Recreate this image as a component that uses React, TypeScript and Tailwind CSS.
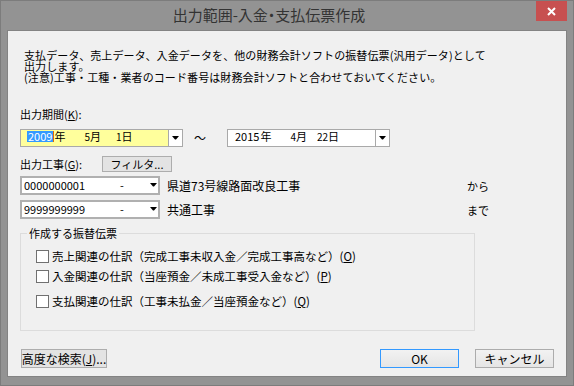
const jp = "font-['Noto_Sans_CJK_JP','Noto_Sans_CJK_SC',sans-serif]";

function Arrow() {
  return (
    <svg width="7" height="4" viewBox="0 0 7 4" className="block">
      <polygon points="0,0 7,0 4,3.5 3,3.5" fill="#000" />
    </svg>
  );
}

function DateBox({ yellow, y, m, d, selected }: { yellow?: boolean; y: string; m: string; d: string; selected?: boolean }) {
  return (
    <div
      className={`w-[163px] h-[18px] border border-[#a9a9a9] flex ${yellow ? 'bg-[#ffff9c]' : 'bg-white'}`}
    >
      <div className="flex-1 flex items-start pt-[1px] pl-[6px] text-[11px] leading-[11px] [font-feature-settings:'palt']">
        {selected ? (
          <span className="flex">
            <span className="bg-[#3399ff] text-white px-[1px]">{y}</span>
            <span className="w-[1px] bg-[#e06a00]" />
          </span>
        ) : (
          <span className="px-[1px]">{y}</span>
        )}
        <span>年</span>
        <span className="ml-[19px] text-[10px]">{m}</span>
        <span>月</span>
        <span className={`${d.length > 1 ? 'ml-[10px]' : 'ml-[15px]'} text-[10px]`}>{d}</span>
        <span>日</span>
      </div>
      <div className="w-[14px] h-full bg-white border-l border-[#a9a9a9] flex items-center justify-center">
        <Arrow />
      </div>
    </div>
  );
}

function Combo({ code }: { code: string }) {
  return (
    <div className="w-[140px] h-[19px] border-2 border-[#b0b0b0] bg-white flex items-start pt-[1px] pl-[2px] text-[11px] leading-[12px]">
      <span className="w-[96px]">{code}</span>
      <span className="w-[30px]">-</span>
      <span className="pt-[4px]">
        <Arrow />
      </span>
    </div>
  );
}

function Check({ label, k }: { label: string; k: string }) {
  return (
    <div className="flex items-center h-[13px]">
      <div className="w-[13px] h-[13px] border border-[#707070] bg-white" />
      <span className="ml-[3px] whitespace-nowrap text-[11.5px] leading-[13px]">
        {label}(<span className="underline">{k}</span>)
      </span>
    </div>
  );
}

export default function App() {
  return (
    <div className={`w-[574px] h-[386px] bg-[#939393] border border-[#7c7c7c] flex flex-col text-black ${jp}`}>
      {/* Title bar */}
      <div className="relative h-[29px] flex items-center justify-center pr-[36px]">
        <span className="text-[15px] text-[#333] [font-feature-settings:'palt']">出力範囲-入金・支払伝票作成</span>
        <div className="absolute right-[6px] top-0 w-[31px] h-[20px] bg-[#c75050] flex items-center justify-center">
          <svg width="9" height="9" viewBox="0 0 9 9">
            <path d="M1 1 L8 8 M8 1 L1 8" stroke="#fff" strokeWidth="2" />
          </svg>
        </div>
      </div>

      {/* Client area */}
      <div className="mx-[6px] h-[347px] bg-[#f0f0f0] border border-[#838383] flex flex-col pl-[12px] pr-[12px] text-[11px] leading-[12px]">
        <p className="mt-[19px] ml-[4px] text-[11px] leading-[11px] tracking-[0.1px] whitespace-nowrap">
          支払データ、売上データ、入金データを、他の財務会計ソフトの振替伝票(汎用データ)として
          <br />
          出力します。
          <br />
          (注意)工事・工種・業者のコード番号は財務会計ソフトと合わせておいてください。
        </p>

        <div className="mt-[25px]">
          出力期間(<span className="underline">K</span>):
        </div>

        <div className="mt-[9px] flex items-center">
          <DateBox yellow selected y="2009" m="5" d="1" />
          <span className="w-[44px] pl-[11px] text-[12px]">～</span>
          <DateBox y="2015" m="4" d="22" />
        </div>

        <div className="mt-[9px] flex items-center h-[16px]">
          <span className="w-[82px]">
            出力工事(<span className="underline">G</span>):
          </span>
          <div className="w-[70px] h-[16px] bg-[#e3e3e3] border border-[#adadad] flex items-center justify-center">
            フィルタ...
          </div>
        </div>

        <div className="mt-[4px] flex items-center">
          <Combo code="0000000001" />
          <span className="ml-[7px] w-[300px] text-[12px] [font-feature-settings:'palt']">県道73号線路面改良工事</span>
          <span>から</span>
        </div>
        <div className="mt-[5px] flex items-center">
          <Combo code="9999999999" />
          <span className="ml-[7px] w-[300px] text-[12px] [font-feature-settings:'palt']">共通工事</span>
          <span>まで</span>
        </div>

        <fieldset className="mt-[8px] w-[455px] h-[104px] border border-[#dcdcdc]">
          <legend className="ml-[6px] px-[2px] leading-[12px]">作成する振替伝票</legend>
          <div className="mt-[11px] pl-[15px] flex flex-col">
            <Check label="売上関連の仕訳（完成工事未収入金／完成工事高など）" k="O" />
            <div className="h-[7px]" />
            <Check label="入金関連の仕訳（当座預金／未成工事受入金など）" k="P" />
            <div className="h-[12px]" />
            <Check label="支払関連の仕訳（工事未払金／当座預金など）" k="Q" />
          </div>
        </fieldset>

        <div className="mt-[18px] flex items-center">
          <div className="ml-[1px] w-[86px] h-[19px] bg-[#e3e3e3] border border-[#adadad] flex items-center justify-center text-[12px] whitespace-nowrap">
            高度な検索(<span className="underline">J</span>)...
          </div>
          <div className="ml-auto w-[79px] h-[19px] bg-gradient-to-b from-[#f2f2f2] to-[#e5e5e5] border border-[#3399ff] flex items-center justify-center text-[12px]">
            OK
          </div>
          <div className="ml-[16px] w-[79px] h-[19px] bg-gradient-to-b from-[#f2f2f2] to-[#e5e5e5] border border-[#acacac] flex items-center justify-center text-[12px]">
            キャンセル
          </div>
        </div>
      </div>
    </div>
  );
}
